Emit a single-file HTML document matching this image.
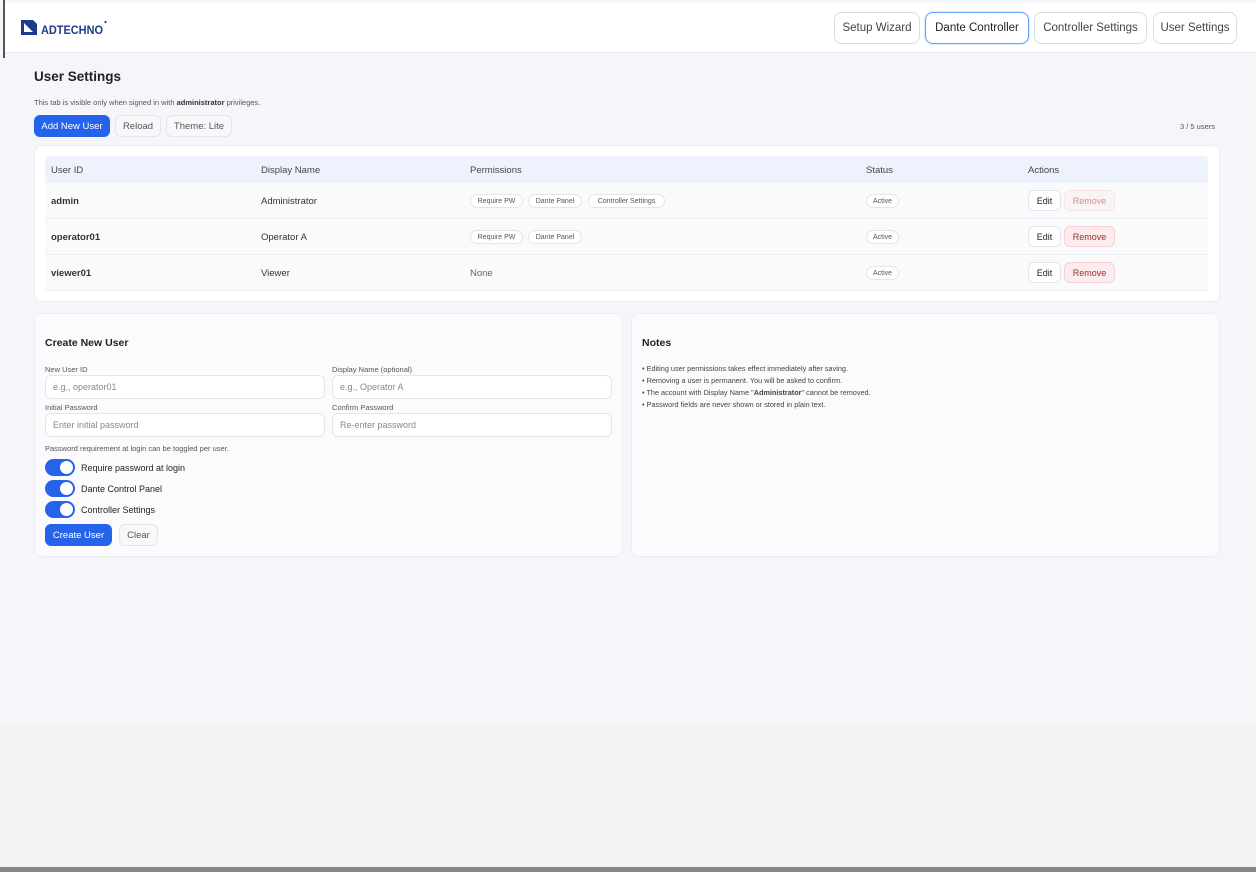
<!DOCTYPE html>
<html><head><meta charset="utf-8"><style>
*{box-sizing:border-box;margin:0;padding:0}
body{width:1256px;height:872px;overflow:hidden;font-family:"Liberation Sans",sans-serif;background:#f2f3f5;position:relative;color:#1f2937}
.top{position:absolute;left:0;top:0;width:1256px;height:722px;background:#f5f6fa}
.hdr{position:absolute;left:5px;top:3px;width:1251px;height:50px;background:#fff;border-bottom:1px solid #e5e7eb}
.lb{position:absolute;left:3px;top:0;width:2px;height:58px;background:#555}
.nav{position:absolute;top:12px;height:32px;border:1px solid #d8dbe0;border-radius:8px;background:#fff;font-size:11.5px;color:#444;display:flex;align-items:center;justify-content:center}
.abs{position:absolute}
.btn{position:absolute;height:22px;border:1px solid #e3e5ea;border-radius:6px;background:#f7f8fa;font-size:9.5px;color:#555;display:flex;align-items:center;justify-content:center}
.card{position:absolute;background:#fbfbfd;border:1px solid #eceef2;border-radius:8px}
.th{position:absolute;font-size:9.5px;color:#444;top:165px}
.td{position:absolute;font-size:9.5px;color:#333}
.pill{position:absolute;height:14px;border:1px solid #e3e5ea;border-radius:7px;font-size:7px;color:#555;display:flex;align-items:center;justify-content:center;background:#fff}
.rl{position:absolute;left:45px;width:1163px;height:1px;background:#eceef2}
.edit{position:absolute;left:1028px;width:33px;height:21px;border:1px solid #e3e5ea;border-radius:6px;background:#fff;font-size:9px;display:flex;align-items:center;justify-content:center;color:#222}
.rm{position:absolute;left:1064px;width:51px;height:21px;border:1px solid #fbcfd3;border-radius:6px;background:#fdecee;font-size:9px;display:flex;align-items:center;justify-content:center;color:#9b2c2c}
.lbl{position:absolute;font-size:7.5px;color:#555}
.inp{position:absolute;height:24px;border:1px solid #e3e5ea;border-radius:6px;background:#fff;font-size:9px;color:#888;padding-left:7px;display:flex;align-items:center}
.tg{position:absolute;left:45px;width:30px;height:17px;border-radius:9px;background:#2563eb}
.tg:after{content:"";position:absolute;right:2px;top:2px;width:13px;height:13px;border-radius:50%;background:#fff}
.tl{position:absolute;left:81px;font-size:9px;color:#222}
</style></head><body>
<div class="top"></div>
<div class="hdr"></div>
<div class="lb"></div>
<svg class="abs" style="left:20px;top:19px" width="88" height="18" viewBox="0 0 88 18">
<path d="M1 1h12l4 4v11H1z M4 4v9h9z" fill="#1e3a8a" fill-rule="evenodd"/>
<text x="21" y="15" font-family="Liberation Sans" font-weight="bold" font-size="12" fill="#1e3a8a" textLength="62" lengthAdjust="spacingAndGlyphs">ADTECHNO</text>
<circle cx="85.5" cy="3" r="1.1" fill="#1e3a8a"/>
</svg>
<div class="nav" style="left:834px;width:86px">Setup Wizard</div>
<div class="nav" style="left:925px;width:104px;border:1.5px solid #60a5fa;color:#222;box-shadow:0 0 0 1px #dbeafe">Dante Controller</div>
<div class="nav" style="left:1034px;width:113px">Controller Settings</div>
<div class="nav" style="left:1153px;width:84px">User Settings</div>

<div class="abs" style="left:34px;top:69px;font-size:13.5px;font-weight:bold;color:#222">User Settings</div>
<div class="abs" style="left:34px;top:98px;font-size:7.5px;color:#555">This tab is visible only when signed in with <b style="color:#333">administrator</b> privileges.</div>
<div class="btn" style="left:34px;top:115px;width:76px;background:#2563eb;border-color:#2563eb;color:#fff">Add New User</div>
<div class="btn" style="left:115px;top:115px;width:46px">Reload</div>
<div class="btn" style="left:166px;top:115px;width:66px">Theme: Lite</div>
<div class="abs" style="left:1180px;top:122px;font-size:7.5px;color:#555">3 / 5 users</div>

<div class="card" style="left:34px;top:145px;width:1186px;height:157px;background:#fff"></div>
<div class="abs" style="left:45px;top:156px;width:1163px;height:27px;background:#edf2fd;border-radius:4px 4px 0 0"></div>
<div class="abs" style="left:45px;top:183px;width:1163px;height:108px;background:#f9fafc"></div>
<div class="th" style="left:51px">User ID</div><div class="th" style="left:261px">Display Name</div><div class="th" style="left:470px">Permissions</div><div class="th" style="left:866px">Status</div><div class="th" style="left:1028px">Actions</div>
<div class="rl" style="top:218px"></div><div class="rl" style="top:254px"></div><div class="rl" style="top:290px"></div>

<div class="td" style="left:51px;top:196px;font-weight:bold">admin</div>
<div class="td" style="left:261px;top:196px">Administrator</div>
<div class="pill" style="left:470px;top:194px;width:53px">Require PW</div>
<div class="pill" style="left:528px;top:194px;width:54px">Dante Panel</div>
<div class="pill" style="left:588px;top:194px;width:77px">Controller Settings</div>
<div class="pill" style="left:866px;top:194px;width:33px">Active</div>
<div class="edit" style="top:190px">Edit</div>
<div class="rm" style="top:190px;opacity:.5">Remove</div>

<div class="td" style="left:51px;top:232px;font-weight:bold">operator01</div>
<div class="td" style="left:261px;top:232px">Operator A</div>
<div class="pill" style="left:470px;top:230px;width:53px">Require PW</div>
<div class="pill" style="left:528px;top:230px;width:54px">Dante Panel</div>
<div class="pill" style="left:866px;top:230px;width:33px">Active</div>
<div class="edit" style="top:226px">Edit</div>
<div class="rm" style="top:226px">Remove</div>

<div class="td" style="left:51px;top:268px;font-weight:bold">viewer01</div>
<div class="td" style="left:261px;top:268px">Viewer</div>
<div class="td" style="left:470px;top:268px;color:#666">None</div>
<div class="pill" style="left:866px;top:266px;width:33px">Active</div>
<div class="edit" style="top:262px">Edit</div>
<div class="rm" style="top:262px">Remove</div>

<div class="card" style="left:34px;top:313px;width:589px;height:244px"></div>
<div class="abs" style="left:45px;top:337px;font-size:10.5px;font-weight:bold;color:#222">Create New User</div>
<div class="lbl" style="left:45px;top:365px">New User ID</div>
<div class="lbl" style="left:332px;top:365px">Display Name (optional)</div>
<div class="inp" style="left:45px;top:375px;width:280px">e.g., operator01</div>
<div class="inp" style="left:332px;top:375px;width:280px">e.g., Operator A</div>
<div class="lbl" style="left:45px;top:403px">Initial Password</div>
<div class="lbl" style="left:332px;top:403px">Confirm Password</div>
<div class="inp" style="left:45px;top:413px;width:280px">Enter initial password</div>
<div class="inp" style="left:332px;top:413px;width:280px">Re-enter password</div>
<div class="lbl" style="left:45px;top:444px">Password requirement at login can be toggled per user.</div>
<div class="tg" style="top:459px"></div><div class="tl" style="top:463px">Require password at login</div>
<div class="tg" style="top:480px"></div><div class="tl" style="top:484px">Dante Control Panel</div>
<div class="tg" style="top:501px"></div><div class="tl" style="top:505px">Controller Settings</div>
<div class="btn" style="left:45px;top:524px;width:67px;background:#2563eb;border-color:#2563eb;color:#fff">Create User</div>
<div class="btn" style="left:119px;top:524px;width:39px">Clear</div>

<div class="card" style="left:631px;top:313px;width:589px;height:244px"></div>
<div class="abs" style="left:642px;top:337px;font-size:10.5px;font-weight:bold;color:#222">Notes</div>
<div class="abs" style="left:642px;top:363px;font-size:7.3px;color:#444;line-height:12px">• Editing user permissions takes effect immediately after saving.<br>• Removing a user is permanent. You will be asked to confirm.<br>• The account with Display Name "<b>Administrator</b>" cannot be removed.<br>• Password fields are never shown or stored in plain text.</div>
<div class="abs" style="left:0;top:867px;width:1256px;height:5px;background:#888"></div>
</body></html>
